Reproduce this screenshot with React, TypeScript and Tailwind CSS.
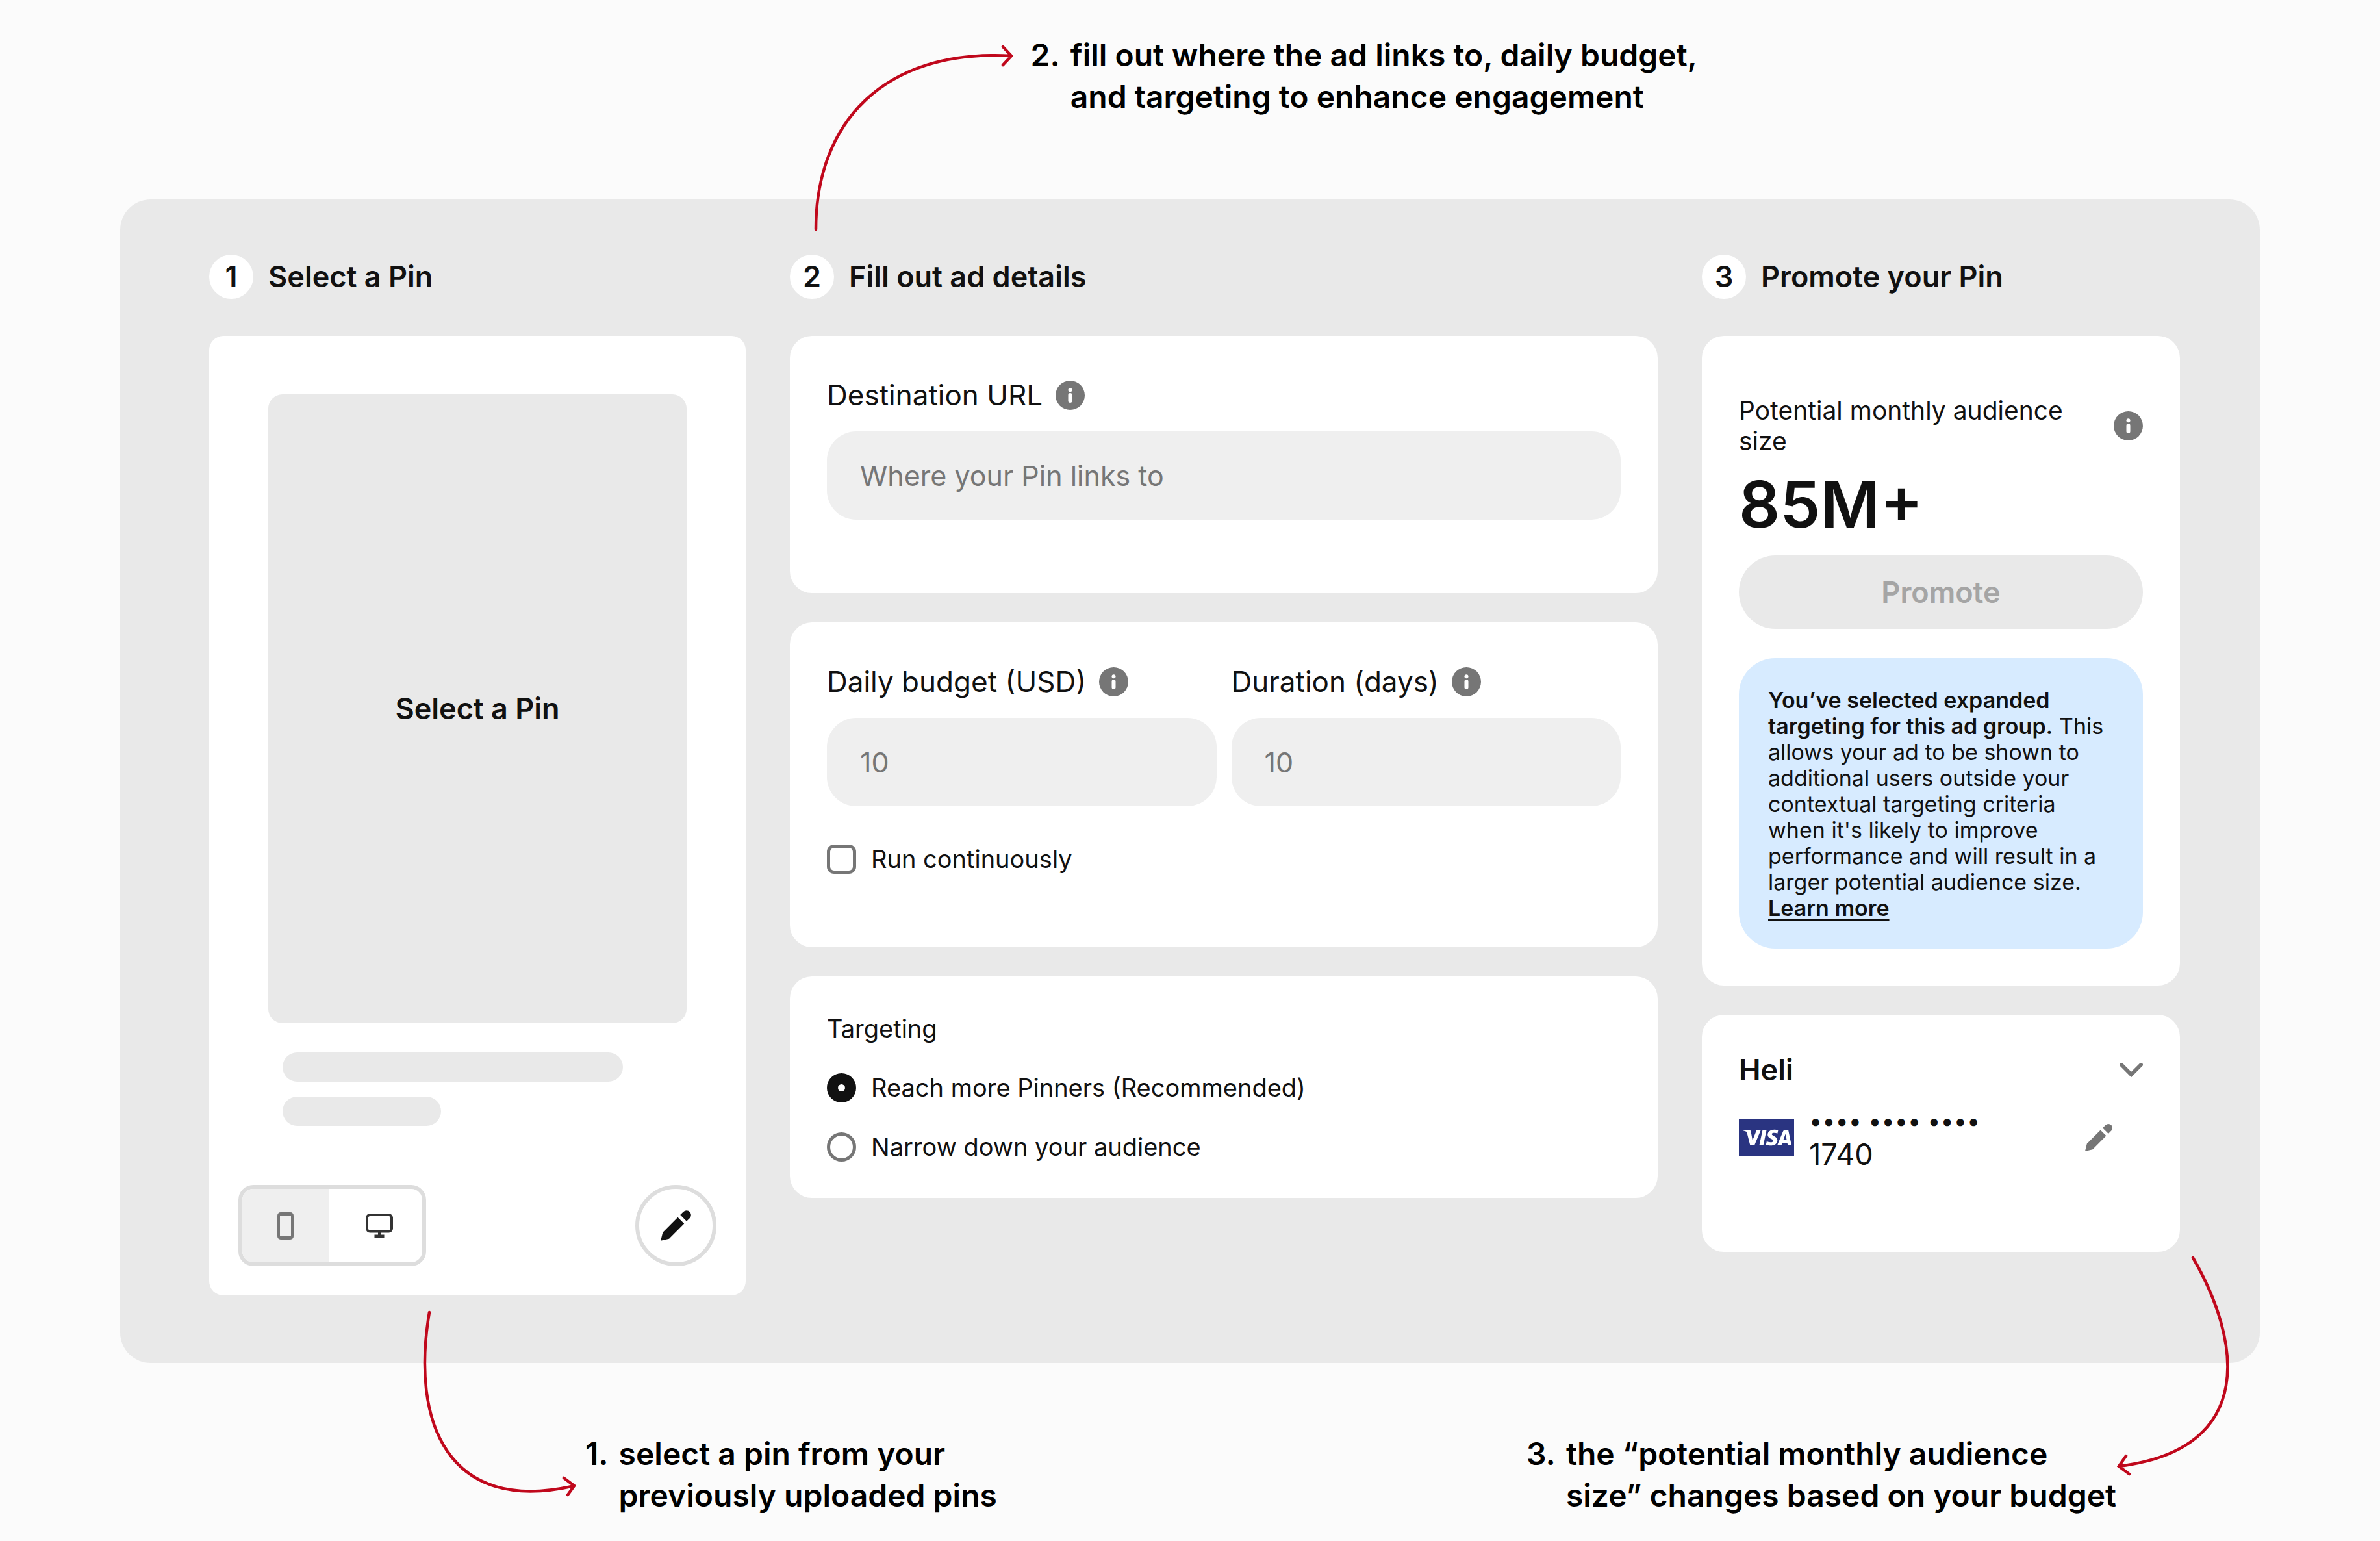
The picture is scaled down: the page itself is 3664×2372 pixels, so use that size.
import { useState } from "react";
import type { ReactNode } from "react";
import { SiVisa } from "react-icons/si";

const EDIT_PATH =
  "m13.386 6.018 4.596 4.596L7.097 21.499 1 22.999l1.501-6.096L13.386 6.018zm8.662-4.066a3.248 3.248 0 0 1 0 4.596L19.75 8.848 15.154 4.252l2.298-2.299a3.248 3.248 0 0 1 4.596 0z";

function EditIcon({ className }: { className: string }) {
  return (
    <svg viewBox="0 0 24 24" className={className} fill="currentColor" aria-hidden="true">
      <path d={EDIT_PATH} />
    </svg>
  );
}

function InfoButton({ label }: { label: string }) {
  return (
    <button type="button" aria-label={label} className="size-[45px] shrink-0 text-[#767676]">
      <svg viewBox="0 0 24 24" className="size-full" aria-hidden="true">
        <circle cx="12" cy="12" r="12" fill="currentColor" />
        <circle cx="12" cy="7.6" r="1.6" fill="#fff" />
        <rect x="10.4" y="10.1" width="3.2" height="8" rx="1.6" fill="#fff" />
      </svg>
    </button>
  );
}

function PhoneIcon() {
  return (
    <svg viewBox="0 0 25 42" className="h-[42px] w-[25px]" aria-hidden="true">
      <path
        fillRule="evenodd"
        fill="#767676"
        d="M5 0h15a5 5 0 0 1 5 5v32a5 5 0 0 1-5 5H5a5 5 0 0 1-5-5V5a5 5 0 0 1 5-5zM4 6v31h17V6z"
      />
    </svg>
  );
}

function DesktopIcon() {
  return (
    <svg viewBox="0 0 42 37" className="h-[37px] w-[42px]" fill="none" aria-hidden="true">
      <rect x="2" y="2" width="38" height="25.500" rx="4.500" stroke="#333" strokeWidth="4" />
      <path d="M19 29h4v3.500h5.500V37h-15v-4.500H19z" fill="#333" />
    </svg>
  );
}

function StepTitle({ step, children }: { step: number; children: ReactNode }) {
  return (
    <div className="mb-[57px] flex items-center gap-[23px]">
      <span className="flex size-[68px] items-center justify-center rounded-full bg-white text-[45px] leading-[56px] font-semibold">
        {step}
      </span>
      <h2 className="text-[45px] leading-[56px] font-semibold">{children}</h2>
    </div>
  );
}

function Field({ id, label, placeholder, info }: { id: string; label: string; placeholder: string; info: string }) {
  return (
    <div className="min-w-0 flex-1">
      <div className="flex h-[46px] items-center gap-[20px]">
        <label htmlFor={id} className="text-[44px] leading-[46px]">
          {label}
        </label>
        <InfoButton label={info} />
      </div>
      <input
        id={id}
        placeholder={placeholder}
        className="mt-[33px] h-[136px] w-full rounded-[45px] bg-[#efefef] px-[51px] text-[43px] text-[#111] outline-none placeholder:text-[#767676]"
      />
    </div>
  );
}

function RadioRow({ label, checked, onSelect }: { label: string; checked: boolean; onSelect: () => void }) {
  return (
    <label className="flex items-center gap-[23px] text-[38px] leading-[46px]">
      <input
        type="radio"
        name="targeting"
        checked={checked}
        onChange={onSelect}
        className="size-[45px] shrink-0 appearance-none rounded-full border-[5px] border-[#767676] bg-white checked:border-[17px] checked:border-[#111]"
      />
      {label}
    </label>
  );
}

function Note({ step, lines, children }: { step: number; lines: string[]; children: ReactNode }) {
  return (
    <div className="relative flex gap-[16px] text-[48px] leading-[64px] font-semibold whitespace-nowrap text-black">
      <span>{step}.</span>
      <p>
        {lines[0]}
        <br />
        {lines[1]}
      </p>
      {children}
    </div>
  );
}

export default function App() {
  const [narrow, setNarrow] = useState(false);

  return (
    <main className="min-h-screen bg-[#fbfbfb] font-['Inter',sans-serif] text-[#111]">
      <div className="flex h-[307px] pt-[53px] pl-[43.3%]">
        <Note step={2} lines={["fill out where the ad links to, daily budget,", "and targeting to enhance engagement"]}>
          <svg
            viewBox="1250 60 320 300"
            className="absolute top-[7px] right-full mr-[18px] h-[300px] w-[320px] overflow-visible"
            fill="none"
            stroke="#c0081c"
            strokeWidth="4.500"
            strokeLinecap="round"
            aria-hidden="true"
          >
            <path d="M1257 353C1257 190 1360 75 1558 86M1545 72L1558 86L1545 100" />
          </svg>
        </Note>
      </div>

      <section className="mx-[185px] rounded-[47px] bg-[#e9e9e9] pt-[85px] pr-[123px] pb-[104px] pl-[137px]">
        <div className="grid grid-cols-[826fr_1336fr_736fr] items-start gap-[68px]">
          <div>
            <StepTitle step={1}>Select a Pin</StepTitle>
            <div className="rounded-[22px] bg-white px-[45px] pt-[90px] pb-[45px]">
              <button
                type="button"
                className="mx-[46px] flex h-[968px] w-[calc(100%-92px)] items-center justify-center rounded-[22px] bg-[#e9e9e9] text-[45px] font-semibold"
              >
                Select a Pin
              </button>
              <div className="mx-[68px] mt-[45px] flex flex-col gap-[23px]">
                <div className="h-[45px] w-[524px] rounded-full bg-[#e9e9e9]" />
                <div className="h-[45px] w-[244px] rounded-full bg-[#e9e9e9]" />
              </div>
              <div className="mt-[91px] flex items-center justify-between">
                <div className="flex h-[125px] w-[289px] overflow-hidden rounded-[23px] border-[6px] border-[#ddd]">
                  <button
                    type="button"
                    aria-label="Mobile preview"
                    aria-pressed="true"
                    className="flex w-[133px] items-center justify-center bg-[#efefef]"
                  >
                    <PhoneIcon />
                  </button>
                  <button type="button" aria-label="Desktop preview" className="flex flex-1 items-center justify-center pl-3">
                    <DesktopIcon />
                  </button>
                </div>
                <button
                  type="button"
                  aria-label="Edit Pin"
                  className="flex size-[125px] items-center justify-center rounded-full border-[6px] border-[#ddd]"
                >
                  <EditIcon className="size-[51px]" />
                </button>
              </div>
            </div>
          </div>

          <div>
            <StepTitle step={2}>Fill out ad details</StepTitle>
            <form className="flex flex-col gap-[45px]">
              <div className="rounded-[34px] bg-white px-[57px] pt-[68px] pb-[113px]">
                <Field id="url" label="Destination URL" placeholder="Where your Pin links to" info="About the destination URL" />
              </div>
              <div className="rounded-[34px] bg-white px-[57px] pt-[68px] pb-[113px]">
                <div className="flex gap-[23px]">
                  <Field id="budget" label="Daily budget (USD)" placeholder="10" info="About the daily budget" />
                  <Field id="duration" label="Duration (days)" placeholder="10" info="About the duration" />
                </div>
                <label className="mt-[58px] flex items-center gap-[23px] text-[38px] leading-[46px]">
                  <input
                    type="checkbox"
                    className="size-[45px] shrink-0 appearance-none rounded-[11px] border-[5px] border-[#767676] bg-white checked:bg-[#111]"
                  />
                  Run continuously
                </label>
              </div>
              <fieldset className="rounded-[34px] bg-white px-[57px] pt-[57px] pb-[56px]">
                <legend className="float-left w-full text-[38px] leading-[46px]">Targeting</legend>
                <div className="clear-both flex flex-col gap-[45px] pt-[45px]">
                  <RadioRow label="Reach more Pinners (Recommended)" checked={!narrow} onSelect={() => setNarrow(false)} />
                  <RadioRow label="Narrow down your audience" checked={narrow} onSelect={() => setNarrow(true)} />
                </div>
              </fieldset>
            </form>
          </div>

          <div>
            <StepTitle step={3}>Promote your Pin</StepTitle>
            <div className="flex flex-col gap-[45px]">
              <div className="rounded-[34px] bg-white px-[57px] pt-[91px] pb-[57px]">
                <div className="flex items-center justify-between gap-[57px]">
                  <p className="text-[39px] leading-[47px]">Potential monthly audience size</p>
                  <InfoButton label="About the audience size" />
                </div>
                <p className="mt-[14px] text-[99px] leading-[120px] font-semibold">85M+</p>
                <button
                  type="button"
                  disabled
                  className="mt-[19px] h-[113px] w-full rounded-full bg-[#e9e9e9] text-[45px] font-semibold text-[#a5a5a5]"
                >
                  Promote
                </button>
                <div className="mt-[45px] rounded-[56px] bg-[#d7ebff] px-[45px] pt-[45px] pb-[42px] text-[34px] leading-[40px]">
                  <p>
                    <strong className="font-semibold">You’ve selected expanded targeting for this ad group.</strong> This
                    allows your ad to be shown to additional users outside your contextual targeting criteria when it's
                    likely to improve performance and will result in a larger potential audience size.{" "}
                    <a href="#learn-more" className="block font-semibold underline decoration-3 underline-offset-4">
                      Learn more
                    </a>
                  </p>
                </div>
              </div>

              <div className="rounded-[34px] bg-white px-[57px] pt-[57px] pb-[125px]">
                <button type="button" className="flex w-full items-center justify-between text-[45px] leading-[56px] font-semibold">
                  Heli
                  <svg viewBox="0 0 36 22" className="h-[22px] w-[36px]" fill="none" aria-hidden="true">
                    <path d="M3 3L18 18L33 3" stroke="#767676" strokeWidth="6" strokeLinecap="round" />
                  </svg>
                </button>
                <div className="mt-[25px] flex items-center">
                  <span className="flex h-[57px] w-[85px] shrink-0 items-center justify-center bg-[#2a3481] text-white">
                    <SiVisa size={76} title="Visa" />
                  </span>
                  <div className="ml-[23px] flex-1 leading-[51px]">
                    <p className="text-[36px]">•••• •••• ••••</p>
                    <p className="text-[45px]">1740</p>
                  </div>
                  <button type="button" aria-label="Edit payment method" className="mr-[45px] text-[#767676]">
                    <EditIcon className="size-[46px]" />
                  </button>
                </div>
              </div>
            </div>
          </div>
        </div>
      </section>

      <div className="flex justify-between pt-[108px] pr-[406px] pl-[901px]">
        <Note step={1} lines={["select a pin from your", "previously uploaded pins"]}>
          <svg
            viewBox="640 2010 250 300"
            className="absolute right-full bottom-[24px] mr-[11px] h-[300px] w-[250px] overflow-visible"
            fill="none"
            stroke="#c0081c"
            strokeWidth="4.500"
            strokeLinecap="round"
            aria-hidden="true"
          >
            <path d="M661 2020C632 2190 690 2332 884 2287M868 2275L884 2287L874 2301" />
          </svg>
        </Note>
        <Note step={3} lines={["the “potential monthly audience", "size” changes based on your budget"]}>
          <svg
            viewBox="3258 1930 180 350"
            className="absolute bottom-[54px] left-full h-[350px] w-[180px] overflow-visible"
            fill="none"
            stroke="#c0081c"
            strokeWidth="4.500"
            strokeLinecap="round"
            aria-hidden="true"
          >
            <path d="M3376 1936C3448 2060 3478 2230 3262 2257M3273 2241L3262 2257L3278 2269" />
          </svg>
        </Note>
      </div>
    </main>
  );
}
